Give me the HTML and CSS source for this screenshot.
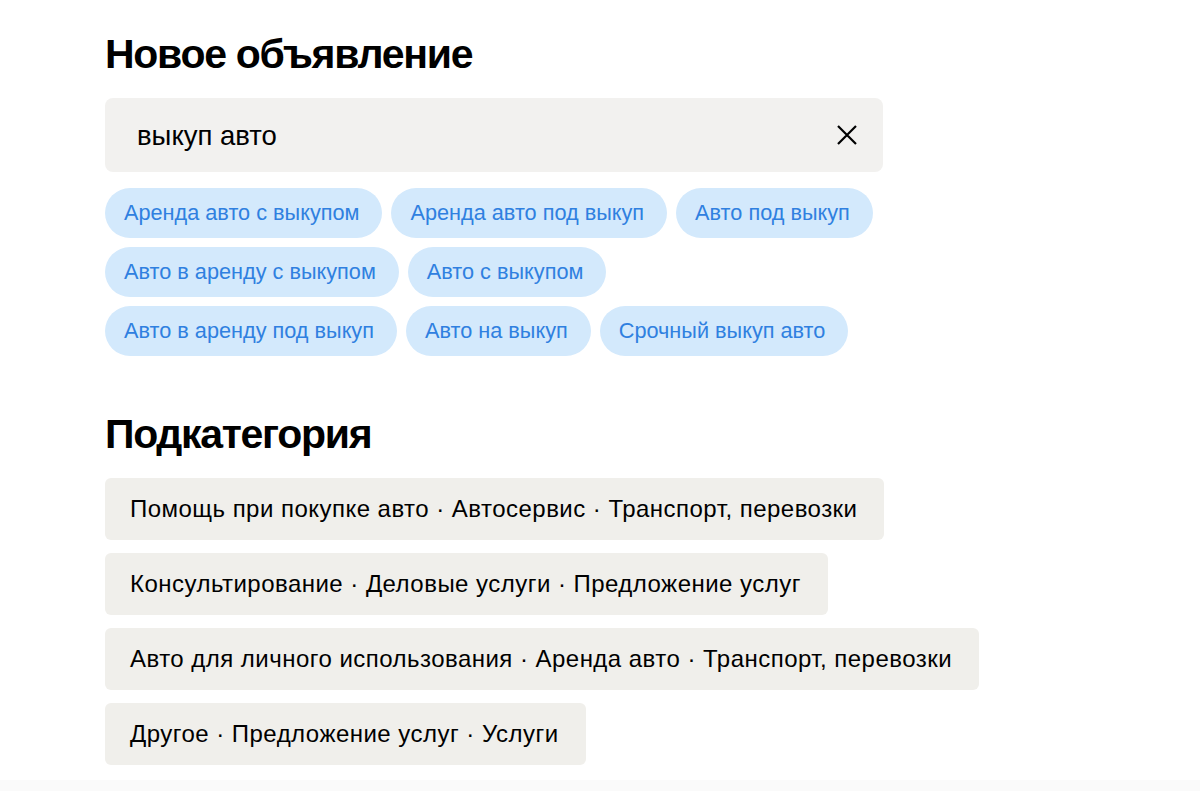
FILE: index.html
```html
<!DOCTYPE html>
<html lang="ru">
<head>
  <meta charset="UTF-8">
  <meta name="viewport" content="width=device-width, initial-scale=1.0">
  <title>Новое объявление</title>
  <link rel="stylesheet" href="styles.css">
</head>
<body>
  <div class="page">
    <h1 class="title">Новое объявление</h1>

    <div class="search">
      <span class="search-text">выкуп авто</span>
      <button class="search-clear" aria-label="Очистить">
        <svg width="20" height="20" viewBox="0 0 20 20">
          <path d="M1 1 L19 19 M19 1 L1 19" stroke="#000" stroke-width="2.2" fill="none"/>
        </svg>
      </button>
    </div>

    <div class="chips">
      <div class="chip-row">
        <span class="chip">Аренда авто с выкупом</span>
        <span class="chip">Аренда авто под выкуп</span>
        <span class="chip">Авто под выкуп</span>
      </div>
      <div class="chip-row">
        <span class="chip">Авто в аренду с выкупом</span>
        <span class="chip">Авто с выкупом</span>
      </div>
      <div class="chip-row">
        <span class="chip">Авто в аренду под выкуп</span>
        <span class="chip">Авто на выкуп</span>
        <span class="chip">Срочный выкуп авто</span>
      </div>
    </div>

    <h2 class="title sub-title">Подкатегория</h2>

    <div class="categories">
      <div class="category">Помощь при покупке авто · Автосервис · Транспорт, перевозки</div>
      <div class="category">Консультирование · Деловые услуги · Предложение услуг</div>
      <div class="category">Авто для личного использования · Аренда авто · Транспорт, перевозки</div>
      <div class="category">Другое · Предложение услуг · Услуги</div>
    </div>
  </div>
  <div class="bottom-bar"></div>
</body>
</html>
```

FILE: styles.css
```css
body {
  margin: 0;
  background: #fff;
  font-family: "Liberation Sans", Arial, sans-serif;
  color: #000;
  height: 791px;
  overflow: hidden;
  position: relative;
}

.page {
  padding: 30px 0 0 105px;
  width: 873px;
}

.title {
  margin: 0;
  font-size: 41px;
  font-weight: bold;
  line-height: 48px;
  letter-spacing: -1.3px;
}

.search {
  margin-top: 20px;
  height: 74px;
  width: 778px;
  background: #f2f1ef;
  border-radius: 8px;
  display: flex;
  align-items: center;
  justify-content: space-between;
  padding: 0 26px 0 32px;
  box-sizing: border-box;
}

.search-text {
  font-size: 27.5px;
  padding-top: 1px;
}

.search-clear {
  border: none;
  background: none;
  padding: 0;
  width: 20px;
  height: 20px;
  display: flex;
  cursor: pointer;
}

.chips {
  margin-top: 16px;
  display: flex;
  flex-direction: column;
  gap: 9px;
}

.chip-row {
  display: flex;
  gap: 9px;
}

.chip {
  height: 50px;
  line-height: 50px;
  padding: 0 23px 0 19px;
  border-radius: 25px;
  background: #d3e9fc;
  color: #2f80e0;
  font-size: 21.7px;
  white-space: nowrap;
}

.sub-title {
  margin-top: 54px;
}

.categories {
  margin-top: 20px;
  display: flex;
  flex-direction: column;
  align-items: flex-start;
  gap: 13px;
}

.category {
  height: 62px;
  line-height: 62px;
  padding: 0 27px 0 25px;
  background: #f0efeb;
  border-radius: 6px;
  font-size: 24px;
  letter-spacing: 0.47px;
  white-space: nowrap;
}

.bottom-bar {
  position: absolute;
  left: 0;
  right: 0;
  bottom: 0;
  height: 11px;
  background: #fafafa;
}
```
